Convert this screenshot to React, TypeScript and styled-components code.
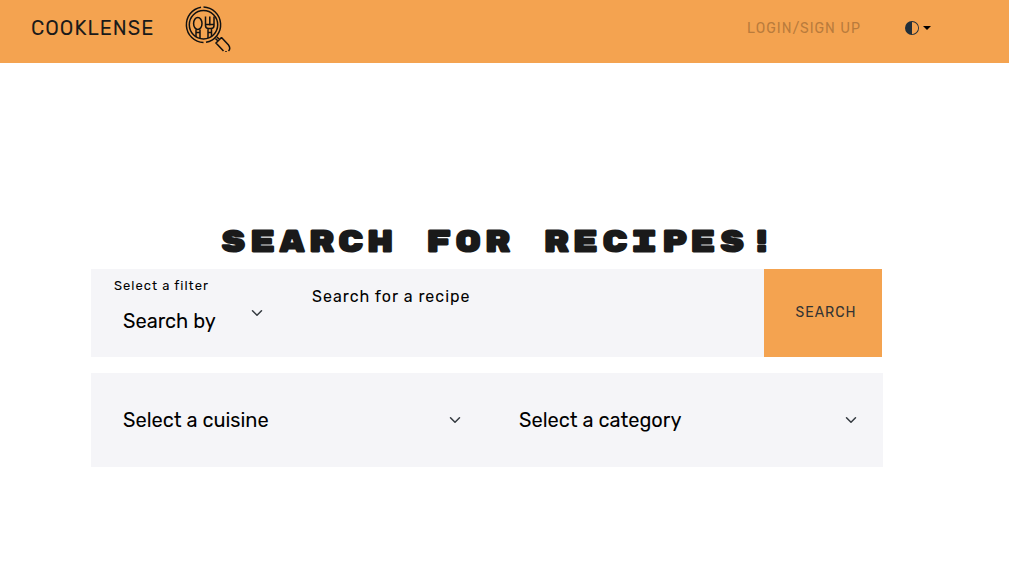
import React from "react";
import styled, { createGlobalStyle } from "styled-components";

const GlobalStyle = createGlobalStyle`
  *, *::before, *::after { box-sizing: border-box; }
  body { margin: 0; background: #fff; color: #000; font-family: Rubik, Roboto, sans-serif; }
  h1 { margin: 0; }
  button, input, select { font-family: inherit; border: 0; border-radius: 0; }
`;

const Navbar = styled.header`
  display: flex;
  align-items: center;
  justify-content: space-between;
  background: #f4a350;
  height: 63px;
  padding: 0 76px 7px 31px;
`;

const Brand = styled.a`
  display: flex;
  align-items: center;
  gap: 29px;
  color: #1a1a1a;
  font-size: 20px;
  letter-spacing: 1px;
  text-decoration: none;
`;

const Logo = styled.svg`
  width: 48px;
  height: 48px;
  fill: none;
  stroke: #111;
  stroke-width: 1.5;
`;

const NavItems = styled.nav`
  display: flex;
  align-items: center;
  gap: 42px;
`;

const NavLink = styled.a`
  color: #b97b3c;
  font-size: 14px;
  letter-spacing: 1px;
  text-decoration: none;
`;

const ThemeButton = styled.button`
  display: flex;
  align-items: center;
  gap: 4px;
  padding: 0 2px;
  background: none;
`;

const Main = styled.main`
  display: flex;
  flex-direction: column;
  padding: 159px 126px 40px 91px;
`;

const Title = styled.h1`
  margin-bottom: 7px;
  padding-left: 24px;
  color: #1a1a1a;
  font-family: "Rubik Mono One", Inter, sans-serif;
  font-size: 31px;
  font-weight: 700;
  line-height: 40px;
  letter-spacing: 3px;
  text-align: center;
`;

const SearchForm = styled.form`
  display: flex;
  flex-direction: column;
  gap: 16px;
`;

const SearchBar = styled.div`
  display: flex;
  height: 88px;
  margin-right: 1px;
  background: #f5f5f8;
`;

const FilterField = styled.div`
  display: flex;
  flex-direction: column;
  width: 198px;
  padding-top: 9px;
`;

const FieldLabel = styled.label<{ $large?: boolean }>`
  padding-left: 23px;
  font-size: ${(p) => (p.$large ? 16 : 13)}px;
  line-height: ${(p) => (p.$large ? 24 : 16)}px;
  letter-spacing: 1px;
`;

const QueryField = styled.div`
  display: flex;
  flex: 1;
  flex-direction: column;
  padding-top: 16px;
`;

const QueryInput = styled.input`
  flex: 1;
  width: 100%;
  padding: 0 23px;
  background: transparent;
  font-size: 16px;
  outline: none;
`;

const SelectBox = styled.div<{ $height: number }>`
  display: grid;
  align-items: center;
  height: ${(p) => p.$height}px;

  & > * { grid-area: 1 / 1; }
`;

const Select = styled.select`
  width: 100%;
  height: 100%;
  padding: 0 48px 0 32px;
  appearance: none;
  background: transparent;
  color: #000;
  font-size: 20px;
  outline: none;
`;

const Chevron = styled.svg<{ $raised?: boolean }>`
  justify-self: end;
  width: 12px;
  height: 12px;
  margin-right: 26px;
  margin-bottom: ${(p) => (p.$raised ? 16 : 0)}px;
  fill: none;
  stroke: #343a40;
  stroke-width: 2;
  stroke-linecap: round;
  stroke-linejoin: round;
  pointer-events: none;
`;

const SearchButton = styled.button`
  width: 118px;
  padding: 0 6px 2px 12px;
  background: #f4a350;
  color: #333;
  font-size: 14px;
  letter-spacing: 1px;
`;

const FilterPanel = styled.div`
  display: grid;
  grid-template-columns: 1fr 1fr;
  background: #f5f5f8;
`;

function Dropdown(props: { id: string; text: string; height: number; raised?: boolean; label?: string }) {
  return (
    <SelectBox $height={props.height}>
      <Select id={props.id} aria-label={props.label}>
        <option>{props.text}</option>
      </Select>
      <Chevron viewBox="0 0 16 16" $raised={props.raised} aria-hidden="true">
        <path d="m2 5 6 6 6-6" />
      </Chevron>
    </SelectBox>
  );
}

function LensLogo() {
  return (
    <Logo viewBox="0 0 48 48" aria-hidden="true">
      <path d="M18 3.200A17.800 17.800 0 0 0 20.500 38.500M23 38.300A17.800 17.800 0 0 0 20.500 3" />
      <circle cx="20.500" cy="20.700" r="14.200" />
      <ellipse cx="14.800" cy="19.500" rx="4.200" ry="6" />
      <path d="M13 25.500v7.500M17 25.500v8.500M13 28.500h4" />
      <path d="M22.500 12.500v9q0 3 3 3h2.500q3 0 3-3v-9M26.800 12.500v9M22.500 20.500h8.500M25 24.500v9.500M28.500 24.500v8M25 28.500H28.500" />
      <path d="M32.500 34.500l2.500 2.500M34 33l2.500 2.500M38.500 33.500L33 39L40.500 47M38.500 33.500L45.500 41Q48 44.500 45.500 47M44 48h-2" />
    </Logo>
  );
}

export default function App() {
  return (
    <>
      <GlobalStyle />
      <Navbar>
        <Brand href="#">
          COOKLENSE
          <LensLogo />
        </Brand>
        <NavItems>
          <NavLink href="#login">LOGIN/SIGN UP</NavLink>
          <ThemeButton type="button" aria-label="Toggle theme">
            <svg width="14" height="14" viewBox="0 0 16 16" fill="#212f3a">
              <path d="M8 15A7 7 0 1 0 8 1zm0 1A8 8 0 1 1 8 0a8 8 0 0 1 0 16" />
            </svg>
            <svg width="8" height="4" viewBox="0 0 8 4" fill="#000">
              <path d="M0 0h8L4 4z" />
            </svg>
          </ThemeButton>
        </NavItems>
      </Navbar>
      <Main>
        <Title>SEARCH FOR RECIPES!</Title>
        <SearchForm onSubmit={(e) => e.preventDefault()}>
          <SearchBar>
            <FilterField>
              <FieldLabel htmlFor="filter">Select a filter</FieldLabel>
              <Dropdown id="filter" text="Search by" height={54} raised />
            </FilterField>
            <QueryField>
              <FieldLabel htmlFor="query" $large>Search for a recipe</FieldLabel>
              <QueryInput id="query" type="text" />
            </QueryField>
            <SearchButton type="submit">SEARCH</SearchButton>
          </SearchBar>
          <FilterPanel>
            <Dropdown id="cuisine" text="Select a cuisine" height={94} label="Cuisine" />
            <Dropdown id="category" text="Select a category" height={94} label="Category" />
          </FilterPanel>
        </SearchForm>
      </Main>
    </>
  );
}
